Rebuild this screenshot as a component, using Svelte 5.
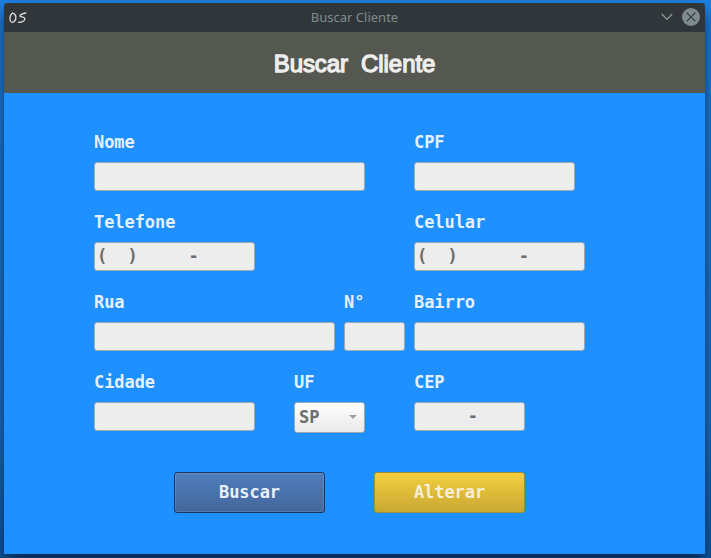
<script>
  const rows = [
    [
      { label: 'Nome', width: 271, gap: 49, value: '' },
      { label: 'CPF', width: 161, gap: 0, value: '' }
    ],
    [
      { label: 'Telefone', width: 161, gap: 159, value: '(  )     -' },
      { label: 'Celular', width: 171, gap: 0, value: '(  )      -' }
    ],
    [
      { label: 'Rua', width: 241, gap: 9, value: '' },
      { label: 'N°', width: 61, gap: 9, value: '' },
      { label: 'Bairro', width: 171, gap: 0, value: '' }
    ],
    [
      { label: 'Cidade', width: 161, gap: 39, value: '' },
      { label: 'UF', width: 71, gap: 49, value: 'SP', select: true },
      { label: 'CEP', width: 111, gap: 0, value: '     -' }
    ]
  ];
</script>

<div class="desktop">
  <div class="window">
    <div class="titlebar">
      <svg class="logo" width="18" height="12" viewBox="0 0 18 12" fill="none" stroke="#e0e1de" stroke-width="1.3" stroke-linecap="round" stroke-linejoin="round">
        <path d="M3.9 1.2C2.2 1.7 1 4.6 1 7.2c0 3 2.3 3.7 4.2 2.2C7.9 7.2 7.4 1.6 3.4 1.2" />
        <path d="M16.8 1c-2.8.3-6 1.7-5.8 3 .2.9 4.8.7 4.9 2.6.1 2.2-3.6 4.4-6.4 3.6" />
      </svg>
      <span class="caption">Buscar Cliente</span>
      <div class="controls">
        <svg width="12" height="8" viewBox="0 0 12 8" fill="none" stroke="#939b9d" stroke-width="1.1"><path d="M.8 1l5.2 5.4L11.2 1" /></svg>
        <svg width="18" height="18" viewBox="0 0 18 18"><circle cx="9" cy="9" r="9" fill="#7f8c8d" /><path d="M4.7 4.7l8.6 8.6M13.3 4.7l-8.6 8.6" stroke="#31363b" stroke-width="1.2" /></svg>
      </div>
    </div>
    <header><h1>Buscar  Cliente</h1></header>
    <main>
      {#each rows as row}
        <div class="row">
          {#each row as field}
            <div class="field" style:width="{field.width}px" style:margin-right="{field.gap}px">
              <span class="label">{field.label}</span>
              <div class="box" class:select={field.select}>
                <span>{field.value}</span>
                {#if field.select}
                  <svg width="8" height="4" viewBox="0 0 8 4"><path d="M0 0h8L4 4z" fill="#a0a2a2" /></svg>
                {/if}
              </div>
            </div>
          {/each}
        </div>
      {/each}
      <div class="actions">
        <button class="search">Buscar</button>
        <button class="edit">Alterar</button>
      </div>
    </main>
  </div>
</div>

<style>
  .desktop {
    box-sizing: border-box;
    width: 711px;
    height: 558px;
    padding: 3px 6px 4px 4px;
    overflow: hidden;
    background: linear-gradient(#1e84e4, #1c74c9 75%, #0f5ba5);
  }
  .window {
    display: flex;
    flex-direction: column;
    height: 551px;
    border-radius: 3px 3px 0 0;
    background: #1e90ff;
    box-shadow: 0 8px 16px rgba(0, 15, 40, 0.75);
  }
  .titlebar {
    display: grid;
    grid-template-columns: 60px 1fr 60px;
    align-items: center;
    height: 29px;
    border-radius: 3px 3px 0 0;
    background: #31363b;
  }
  .logo {
    margin-left: 5px;
  }
  .caption {
    padding-bottom: 2px;
    text-align: center;
    font: 13px/18px "Noto Sans", sans-serif;
    color: #7f8c8d;
  }
  .controls {
    display: flex;
    align-items: center;
    justify-content: flex-end;
    gap: 9px;
    padding: 0 5px 1px 0;
  }
  header {
    box-sizing: border-box;
    display: flex;
    align-items: center;
    justify-content: center;
    height: 61px;
    padding-top: 2px;
    background: #555751;
  }
  h1 {
    margin: 0;
    white-space: pre;
    font: 400 24px/28px "Liberation Sans", sans-serif;
    letter-spacing: -0.08px;
    color: #eeeeec;
    -webkit-text-stroke: 1.3px #eeeeec;
  }
  main {
    padding: 39px 0 0 90px;
    font: bold 17px/20px "DejaVu Sans Mono", monospace;
    letter-spacing: -0.06px;
    color: #e4f1fc;
  }
  .row {
    display: flex;
    height: 80px;
  }
  .label {
    display: block;
    height: 30px;
  }
  .box {
    box-sizing: border-box;
    display: flex;
    align-items: center;
    height: 29px;
    padding: 0 2px 2px;
    white-space: pre;
    border: 1px solid #9ba8b5;
    border-radius: 3px;
    background: #ededed;
    color: #6c6e70;
  }
  .select {
    justify-content: space-between;
    height: 31px;
    padding: 0 7px 1px 4px;
    background: linear-gradient(#fff, #e9e9e8);
  }
  .actions {
    display: flex;
    gap: 49px;
    padding: 20px 0 0 80px;
  }
  button {
    box-sizing: border-box;
    width: 151px;
    height: 41px;
    padding: 0 0 2px;
    border-radius: 3px;
    font: inherit;
    letter-spacing: inherit;
  }
  .search {
    border: 1px solid #173660;
    background: linear-gradient(#507dbd, #43679b);
    box-shadow: inset 0 0 0 1px rgba(255, 255, 255, 0.12);
    color: #e8f0f8;
  }
  .edit {
    border: 1px solid #9b9138;
    background: linear-gradient(#f3cf3e, #c9a834);
    color: #f6eed8;
  }
</style>
